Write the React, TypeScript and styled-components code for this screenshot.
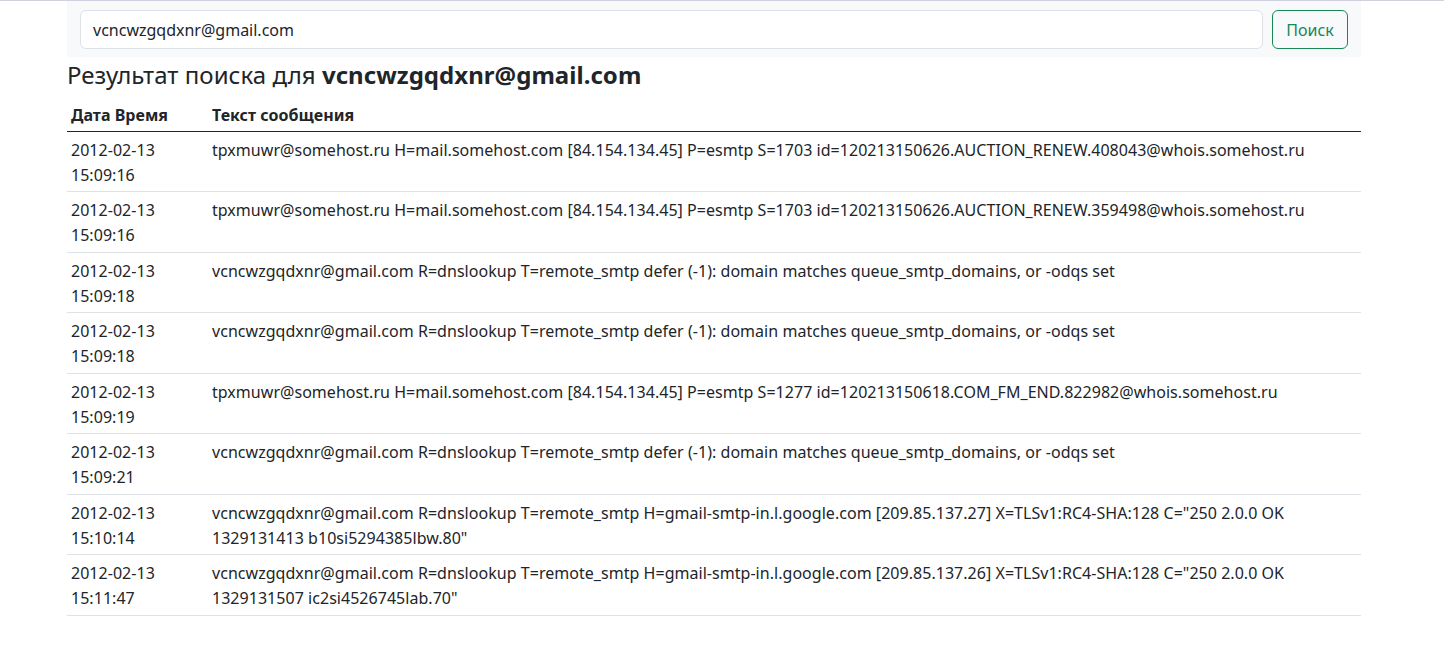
import { FC } from "react";
import styled, { createGlobalStyle } from "styled-components";

const GlobalStyle = createGlobalStyle`
  * {
    box-sizing: border-box;
  }
  body {
    margin: 0;
    background: #fff;
    color: #212529;
    font-family: "Noto Sans", "Liberation Sans", Arial, sans-serif;
    font-size: 16px;
    line-height: 1.5;
  }
`;

const TopLine = styled.div`
  height: 1px;
  background: #cfd0e0;
`;

const Container = styled.div`
  width: 1294px;
  margin-left: 67px;
`;

const SearchBar = styled.form`
  display: flex;
  gap: 9px;
  padding: 9px 13px 8px;
  background: #f8f9fa;
`;

const SearchInput = styled.input`
  flex: 1;
  height: 39px;
  padding: 6px 12px;
  font: inherit;
  color: #212529;
  background: #fff;
  border: 1px solid #dee2e6;
  border-radius: 6px;
  outline: none;
`;

const SearchButton = styled.button`
  width: 76px;
  height: 39px;
  font: inherit;
  color: #198754;
  background: transparent;
  border: 1px solid #198754;
  border-radius: 6px;
  cursor: pointer;
`;

const Title = styled.h4`
  margin: 4px 0 5px;
  font-size: 24px;
  font-weight: 400;
  line-height: 1.2;
  letter-spacing: 0.04px;
`;

const Table = styled.table`
  width: 100%;
  border-collapse: collapse;
  letter-spacing: 0.035px;
`;

const HeadCell = styled.th`
  padding: 8px 4px 4px;
  text-align: left;
  font-weight: 700;
  border-bottom: 1px solid #212529;
`;

const Row = styled.tr`
  border-bottom: 1px solid #dee2e6;
`;

const Cell = styled.td<{ $narrow?: boolean }>`
  padding: 6px 4px 3.5px;
  line-height: 25px;
  vertical-align: top;
  width: ${(p) => (p.$narrow ? "141px" : "auto")};
`;

type Entry = { date: string; time: string; text: string };

const entries: Entry[] = [
  {
    date: "2012-02-13",
    time: "15:09:16",
    text: "tpxmuwr@somehost.ru H=mail.somehost.com [84.154.134.45] P=esmtp S=1703 id=120213150626.AUCTION_RENEW.408043@whois.somehost.ru",
  },
  {
    date: "2012-02-13",
    time: "15:09:16",
    text: "tpxmuwr@somehost.ru H=mail.somehost.com [84.154.134.45] P=esmtp S=1703 id=120213150626.AUCTION_RENEW.359498@whois.somehost.ru",
  },
  {
    date: "2012-02-13",
    time: "15:09:18",
    text: "vcncwzgqdxnr@gmail.com R=dnslookup T=remote_smtp defer (-1): domain matches queue_smtp_domains, or -odqs set",
  },
  {
    date: "2012-02-13",
    time: "15:09:18",
    text: "vcncwzgqdxnr@gmail.com R=dnslookup T=remote_smtp defer (-1): domain matches queue_smtp_domains, or -odqs set",
  },
  {
    date: "2012-02-13",
    time: "15:09:19",
    text: "tpxmuwr@somehost.ru H=mail.somehost.com [84.154.134.45] P=esmtp S=1277 id=120213150618.COM_FM_END.822982@whois.somehost.ru",
  },
  {
    date: "2012-02-13",
    time: "15:09:21",
    text: "vcncwzgqdxnr@gmail.com R=dnslookup T=remote_smtp defer (-1): domain matches queue_smtp_domains, or -odqs set",
  },
  {
    date: "2012-02-13",
    time: "15:10:14",
    text: 'vcncwzgqdxnr@gmail.com R=dnslookup T=remote_smtp H=gmail-smtp-in.l.google.com [209.85.137.27] X=TLSv1:RC4-SHA:128 C="250 2.0.0 OK 1329131413 b10si5294385lbw.80"',
  },
  {
    date: "2012-02-13",
    time: "15:11:47",
    text: 'vcncwzgqdxnr@gmail.com R=dnslookup T=remote_smtp H=gmail-smtp-in.l.google.com [209.85.137.26] X=TLSv1:RC4-SHA:128 C="250 2.0.0 OK 1329131507 ic2si4526745lab.70"',
  },
];

const query = "vcncwzgqdxnr@gmail.com";

const App: FC = () => {
  return (
    <>
      <GlobalStyle />
      <TopLine />
      <Container>
        <SearchBar onSubmit={(e) => e.preventDefault()}>
          <SearchInput defaultValue={query} />
          <SearchButton type="submit">Поиск</SearchButton>
        </SearchBar>
        <Title>
          Результат поиска для <b>{query}</b>
        </Title>
        <Table>
          <thead>
            <tr>
              <HeadCell>Дата Время</HeadCell>
              <HeadCell>Текст сообщения</HeadCell>
            </tr>
          </thead>
          <tbody>
            {entries.map((e, i) => (
              <Row key={i}>
                <Cell $narrow>
                  {e.date}
                  <br />
                  {e.time}
                </Cell>
                <Cell>{e.text}</Cell>
              </Row>
            ))}
          </tbody>
        </Table>
      </Container>
    </>
  );
};

export default App;
